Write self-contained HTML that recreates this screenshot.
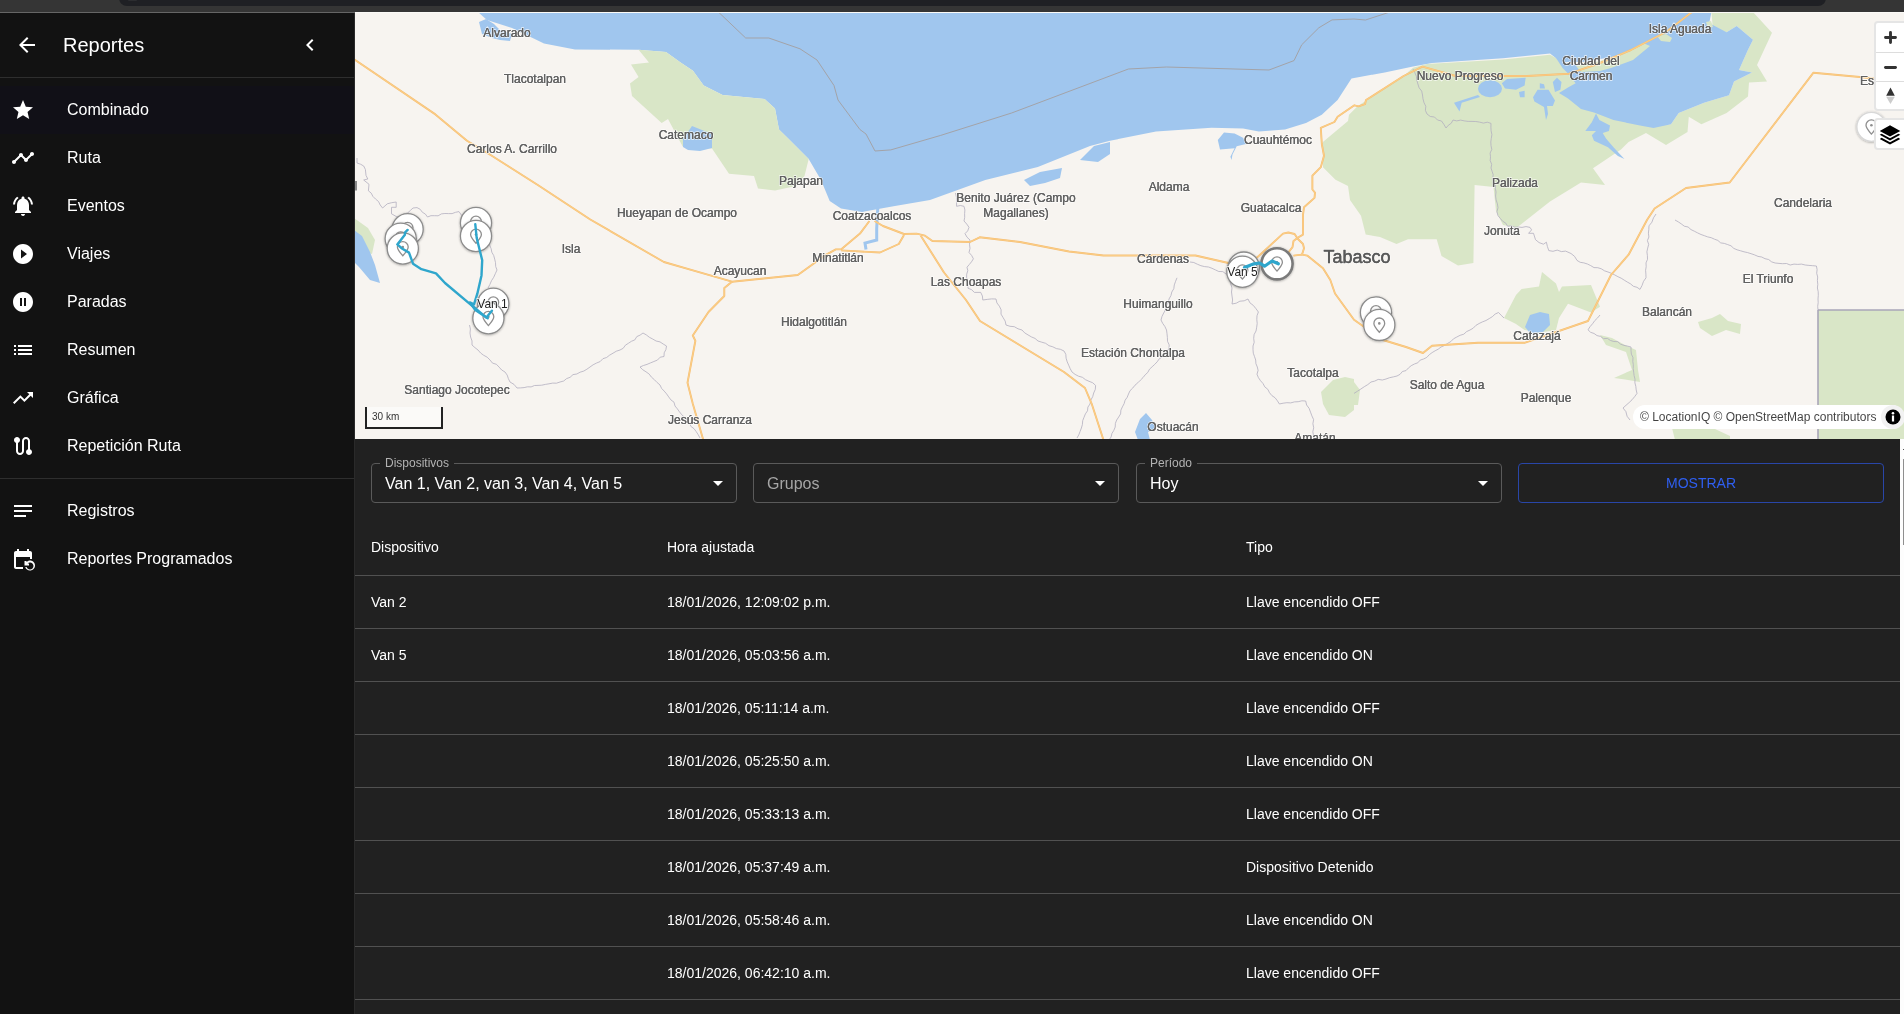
<!DOCTYPE html>
<html><head><meta charset="utf-8">
<style>
*{box-sizing:border-box;margin:0;padding:0}
html,body{width:1904px;height:1014px;overflow:hidden;background:#121212;font-family:"Liberation Sans",sans-serif;}
#top{position:absolute;left:0;top:0;width:1904px;height:12px;background:#353535}
#top .bar{position:absolute;left:119px;top:-10px;width:1707px;height:16px;background:#1f2024;border-radius:9px}
#topline{position:absolute;left:0;top:12px;width:355px;height:1px;background:#666}
#side{will-change:transform;position:absolute;left:0;top:13px;width:354px;height:1001px;background:#121212}
#sideborder{position:absolute;left:354px;top:13px;width:1px;height:1001px;background:#2a2a2a}
.hdr{position:absolute;left:0;top:0;width:354px;height:65px;border-bottom:1px solid #2e2e2e}
.hdr .t{position:absolute;left:63px;top:20px;font-size:20px;color:#fff;line-height:24px}
.item{position:absolute;left:0;width:354px;height:48px}
.item.sel{background:#111017}
.item .ic{position:absolute;left:11px;top:12px;width:24px;height:24px}
.item .lb{position:absolute;left:67px;top:12px;font-size:16px;line-height:24px;color:#fff}
.div2{position:absolute;left:0;top:465px;width:354px;height:1px;background:#2e2e2e}
#map{will-change:transform;position:absolute;left:355px;top:13px;width:1549px;height:426px;overflow:hidden;background:#f7f4f0}
#panel{will-change:transform;position:absolute;left:355px;top:439px;width:1545px;height:575px;background:#212121}
#scroll{position:absolute;left:1900px;top:439px;width:4px;height:575px;background:#fdfdfd}
.fld{position:absolute;top:24px;height:40px;width:366px;border:1px solid #5a5a5a;border-radius:4px}
.fld .lab{position:absolute;left:8px;top:-8px;padding:0 5px;background:#212121;font-size:12px;line-height:14px;color:#b3b3b3}
.fld .val{position:absolute;left:13px;top:10px;font-size:16px;line-height:19px;color:#fff}
.fld .val.ph{color:#a6a6a6}
.fld .arr{position:absolute;right:13px;top:17px;width:0;height:0;border-left:5px solid transparent;border-right:5px solid transparent;border-top:5px solid #fff}
.btn{position:absolute;top:24px;left:1163px;width:366px;height:40px;border:1px solid #2946a8;border-radius:4px;color:#2f5ff0;font-size:14px;text-align:center;line-height:38px;letter-spacing:0}
.th{position:absolute;top:80px;left:0;width:1545px;height:57px;border-bottom:1px solid #515151}
.tr{position:absolute;left:0;width:1545px;height:53px;border-bottom:1px solid #515151}
.c{position:absolute;font-size:14px;color:#fff;line-height:20px}
.th .c{top:18px;line-height:20px}
.tr .c{top:16px}
.c1{left:16px}.c2{left:312px}.c3{left:891px}
#mapsvg{position:absolute;left:0;top:0}
.lbl{font-family:"Liberation Sans",sans-serif;fill:#606060;text-anchor:middle;paint-order:stroke;stroke:rgba(255,255,255,0.8);stroke-width:1.5px}
.big{font-size:18px}
.lbl2{font-family:"Liberation Sans",sans-serif;fill:#626262;text-anchor:middle;stroke:#626262;stroke-width:0.22px}
.lbl2.big{stroke-width:0.4px;fill:#5a5a5a;stroke:#5a5a5a}
.vl{font-family:"Liberation Sans",sans-serif;font-size:12px;fill:#222;text-anchor:middle;paint-order:stroke;stroke:rgba(255,255,255,0.85);stroke-width:1.5px}
.mctl{position:absolute;background:#fff;border:2px solid rgba(0,0,0,0.1);border-radius:4px;overflow:hidden}
.mctl .mb{position:absolute;left:0;width:40px;height:29px}
.scale{position:absolute;left:10px;top:394px;width:78px;height:22px;border:2px solid #222;border-top:none;background:rgba(255,255,255,0.5)}
.scale span{position:absolute;left:5px;top:4px;font-size:10px;color:#333;line-height:12px}
.attr{position:absolute;left:1278px;top:392px;width:271px;height:24px;background:#fff;border-radius:12px;font-size:12px;line-height:24px;color:rgba(0,0,0,0.75);padding-left:7px}
.info{position:absolute;left:1526px;top:392px;width:24px;height:24px;border-radius:12px;background:#f2f2f2}
</style></head><body>
<div id="top"><div class="bar"></div></div>
<div id="topline"></div><div style="position:absolute;left:355px;top:12px;width:1549px;height:1px;background:#fbfaf7"></div><div style="position:absolute;left:128px;top:0;width:9px;height:1px;background:#2c2d30;border-radius:0 0 4px 4px"></div>
<div id="side">
  <div class="hdr">
    <svg style="position:absolute;left:15px;top:20px" width="24" height="24" viewBox="0 0 24 24"><path fill="#fff" d="M20 11H7.83l5.59-5.59L12 4l-8 8 8 8 1.41-1.41L7.83 13H20v-2z"/></svg>
    <div class="t">Reportes</div>
    <svg style="position:absolute;left:298px;top:20px" width="24" height="24" viewBox="0 0 24 24"><path fill="#fff" d="M15.41 7.41L14 6l-6 6 6 6 1.41-1.41L10.83 12z"/></svg>
  </div>
  <div class="item sel" style="top:73px"><svg class="ic" viewBox="0 0 24 24"><path fill="#fff" d="M12 17.27L18.18 21l-1.64-7.03L22 9.24l-7.19-.61L12 2 9.19 8.63 2 9.24l5.46 4.73L5.82 21z"/></svg><div class="lb">Combinado</div></div>
  <div class="item" style="top:121px"><svg class="ic" viewBox="0 0 24 24"><path fill="#fff" d="M23 8c0 1.1-.9 2-2 2-.18 0-.35-.02-.51-.07l-3.56 3.55c.05.16.07.34.07.52 0 1.1-.9 2-2 2s-2-.9-2-2c0-.18.02-.36.07-.52l-2.55-2.55c-.16.05-.34.07-.52.07s-.36-.02-.52-.07l-4.55 4.56c.05.16.07.33.07.51 0 1.1-.9 2-2 2s-2-.9-2-2 .9-2 2-2c.18 0 .35.02.51.07l4.56-4.55C8.02 9.36 8 9.18 8 9c0-1.1.9-2 2-2s2 .9 2 2c0 .18-.02.36-.07.52l2.55 2.55c.16-.05.34-.07.52-.07s.36.02.52.07l3.55-3.56C19.02 8.35 19 8.18 19 8c0-1.1.9-2 2-2s2 .9 2 2z"/></svg><div class="lb">Ruta</div></div>
  <div class="item" style="top:169px"><svg class="ic" viewBox="0 0 24 24"><path fill="#fff" d="M7.58 4.08L6.15 2.65C3.75 4.48 2.17 7.3 2.03 10.5h2c.15-2.65 1.51-4.97 3.55-6.42zm12.39 6.42h2c-.15-3.2-1.73-6.02-4.12-7.85l-1.42 1.43c2.02 1.45 3.39 3.77 3.54 6.42zM18 11c0-3.07-1.64-5.64-4.5-6.32V4c0-.83-.67-1.5-1.5-1.5s-1.5.67-1.5 1.5v.68C7.63 5.36 6 7.92 6 11v5l-2 2v1h16v-1l-2-2v-5zm-6 11c.14 0 .27-.01.4-.04.65-.14 1.18-.58 1.44-1.18.1-.24.15-.5.15-.78h-4c.01 1.1.9 2 2.01 2z"/></svg><div class="lb">Eventos</div></div>
  <div class="item" style="top:217px"><svg class="ic" viewBox="0 0 24 24"><path fill="#fff" d="M12 2C6.48 2 2 6.48 2 12s4.48 10 10 10 10-4.48 10-10S17.52 2 12 2zm-2 14.5v-9l6 4.5-6 4.5z"/></svg><div class="lb">Viajes</div></div>
  <div class="item" style="top:265px"><svg class="ic" viewBox="0 0 24 24"><path fill="#fff" d="M12 2C6.48 2 2 6.48 2 12s4.48 10 10 10 10-4.48 10-10S17.52 2 12 2zm-1 14H9V8h2v8zm4 0h-2V8h2v8z"/></svg><div class="lb">Paradas</div></div>
  <div class="item" style="top:313px"><svg class="ic" viewBox="0 0 24 24"><path fill="#fff" d="M3 13h2v-2H3v2zm0 4h2v-2H3v2zm0-8h2V7H3v2zm4 4h14v-2H7v2zm0 4h14v-2H7v2zM7 7v2h14V7H7z"/></svg><div class="lb">Resumen</div></div>
  <div class="item" style="top:361px"><svg class="ic" viewBox="0 0 24 24"><path fill="#fff" d="M16 6l2.29 2.29-4.88 4.88-4-4L2 16.59 3.41 18l6-6 4 4 6.3-6.29L22 12V6z"/></svg><div class="lb">Gráfica</div></div>
  <div class="item" style="top:409px"><svg class="ic" viewBox="0 0 24 24"><path fill="#fff" d="M19 15.18V7c0-2.21-1.79-4-4-4s-4 1.79-4 4v10c0 1.1-.9 2-2 2s-2-.9-2-2V8.82C8.16 8.4 9 7.3 9 6c0-1.66-1.34-3-3-3S3 4.34 3 6c0 1.3.84 2.4 2 2.82V17c0 2.21 1.79 4 4 4s4-1.79 4-4V7c0-1.1.9-2 2-2s2 .9 2 2v8.18c-1.16.41-2 1.51-2 2.82 0 1.66 1.34 3 3 3s3-1.34 3-3c0-1.3-.84-2.4-2-2.82z"/></svg><div class="lb">Repetición Ruta</div></div>
  <div class="div2"></div>
  <div class="item" style="top:474px"><svg class="ic" viewBox="0 0 24 24"><path fill="#fff" d="M3 18h12v-2H3v2zM3 6v2h18V6H3zm0 7h18v-2H3v2z"/></svg><div class="lb">Registros</div></div>
  <div class="item" style="top:522px"><svg class="ic" viewBox="0 0 24 24"><path fill="#fff" d="M21 12V6c0-1.1-.9-2-2-2h-1V2h-2v2H8V2H6v2H5c-1.1 0-2 .9-2 2v14c0 1.1.9 2 2 2h7v-2H5V10h14v2h2zm-5.36 8c.43 1.45 1.77 2.5 3.36 2.5 1.93 0 3.5-1.57 3.5-3.5s-1.57-3.5-3.5-3.5c-.95 0-1.82.38-2.45 1H18v2h-4.5V14h2v1.02c.89-.91 2.13-1.52 3.5-1.52 2.76 0 5 2.24 5 5s-2.24 5-5 5c-2.24 0-4.13-1.47-4.77-3.5h1.41z"/></svg><div class="lb">Reportes Programados</div></div>
</div>
<div id="sideborder"></div>
<div id="map"><svg id="mapsvg" width="1549" height="426" viewBox="355 13 1549 426"><defs><filter id="sh" x="-30%" y="-30%" width="160%" height="160%"><feDropShadow dx="0" dy="0.5" stdDeviation="0.8" flood-color="#000" flood-opacity="0.35"/></filter></defs><rect x="355" y="13" width="1549" height="426" fill="#f7f4f0"/><path fill="#a0c6ee" d="M478.0 12.0 L487.0 20.0 L512.0 28.0 L544.0 43.5 L575.0 49.4 L638.6 49.8 L666.0 52.0 L680.6 62.4 L693.0 70.8 L703.7 85.5 L722.6 95.0 L764.6 99.0 L775.0 108.6 L779.0 129.6 L787.7 138.0 L808.7 159.0 L821.0 180.0 L829.7 201.0 L841.0 208.4 L862.0 212.0 L893.5 206.3 L930.0 200.0 L985.3 180.0 L1037.8 167.0 L1090.0 146.0 L1110.0 140.7 L1156.0 131.5 L1211.5 127.8 L1243.0 128.4 L1258.8 131.5 L1285.0 129.4 L1306.0 123.0 L1321.8 114.7 L1337.6 100.0 L1351.5 78.4 L1384.7 72.5 L1413.0 66.6 L1432.0 63.0 L1503.0 58.3 L1550.0 53.6 L1561.0 62.0 L1584.0 62.0 L1622.0 54.9 L1643.4 43.5 L1666.0 34.0 L1709.0 24.0 L1711.5 12.0 Z"/><path fill="#d9e6c7" d="M638.6 49.8 L666.0 52.0 L680.6 62.4 L693.0 70.8 L703.7 85.5 L722.6 95.0 L764.6 99.0 L775.0 108.6 L779.0 129.6 L787.7 138.0 L808.7 159.0 L804.5 175.9 L796.0 186.0 L775.0 190.6 L758.0 188.5 L754.0 176.0 L729.0 173.8 L712.0 148.6 L682.7 146.5 L668.0 119.0 L661.7 123.0 L632.0 96.0 L630.0 83.4 L638.6 77.0 L631.0 64.5 L649.0 62.4 Z"/><path fill="#d9e6c7" d="M1322.9 142.0 L1348.0 121.0 L1349.0 114.7 L1357.5 106.3 L1367.0 100.0 L1403.6 76.0 L1413.0 67.8 L1427.0 64.0 L1503.0 59.5 L1550.0 54.7 L1556.0 58.0 L1566.0 70.0 L1590.0 85.0 L1586.0 106.8 L1621.0 118.6 L1650.0 125.7 L1671.0 124.2 L1678.7 112.9 L1704.0 102.8 L1729.0 95.2 L1734.0 81.4 L1752.0 72.5 L1739.0 70.0 L1748.0 49.8 L1753.0 39.7 L1736.7 25.9 L1726.6 32.2 L1712.8 28.4 L1711.5 12.0 L1753.0 12.0 L1772.0 32.8 L1757.0 65.0 L1767.0 81.4 L1749.0 82.6 L1748.0 96.5 L1726.6 112.9 L1701.4 124.2 L1688.8 116.7 L1687.5 132.0 L1666.0 145.0 L1646.0 133.0 L1628.6 142.0 L1621.0 149.4 L1593.0 168.3 L1605.0 185.0 L1581.0 182.5 L1550.0 201.5 L1517.0 227.5 L1503.0 225.0 L1496.0 211.0 L1493.5 187.0 L1474.6 185.0 L1473.4 263.0 L1458.0 265.4 L1441.5 256.0 L1436.7 239.3 L1408.0 239.3 L1396.5 244.0 L1380.0 237.0 L1365.7 234.6 L1361.0 215.7 L1350.0 200.0 L1348.0 186.0 L1335.5 179.8 L1323.0 167.2 Z"/><path fill="#d9e6c7" d="M1504.0 318.0 L1516.0 295.0 L1521.6 289.0 L1539.0 286.5 L1542.0 272.0 L1556.0 283.6 L1559.0 292.0 L1562.0 286.5 L1591.0 285.0 L1600.0 306.7 L1591.0 312.5 L1568.0 303.8 L1559.0 318.0 L1556.0 330.0 L1539.0 332.7 L1524.5 330.0 L1516.0 324.0 Z"/><path fill="#d9e6c7" d="M1698.0 322.0 L1712.0 318.0 L1720.0 314.0 L1728.0 321.0 L1741.0 324.0 L1740.0 334.0 L1726.0 330.0 L1712.0 336.0 L1700.0 328.0 Z"/><path fill="#d9e6c7" d="M1321.0 392.0 L1333.0 380.0 L1345.0 377.0 L1354.0 379.0 L1354.0 410.0 L1345.0 417.0 L1329.0 415.0 L1323.0 404.0 Z"/><path fill="#d9e6c7" d="M1600.0 335.0 L1612.0 338.0 L1625.0 345.0 L1636.0 350.0 L1638.0 370.0 L1640.0 382.0 L1628.0 380.0 L1614.0 378.0 L1632.0 370.0 L1626.0 352.0 L1606.0 345.0 Z"/><path fill="#d9e6c7" d="M1672.0 428.0 L1700.0 422.0 L1730.0 436.0 L1730.0 440.0 L1675.0 440.0 Z"/><path fill="#d9e6c7" d="M1354.0 382.0 L1360.0 390.0 L1358.0 405.0 L1354.0 405.0 Z"/><path fill="#d9e6c7" d="M1818.0 310.0 L1904.0 310.0 L1904.0 440.0 L1818.0 440.0 Z"/><path fill="#d9e6c7" d="M354.0 218.0 L368.0 228.0 L375.0 240.0 L372.0 254.0 L360.0 250.0 L354.0 240.0 Z"/><path fill="#a0c6ee" d="M1554.0 55.0 L1562.6 62.0 L1581.0 66.0 L1600.5 62.0 L1622.0 54.9 L1643.4 43.5 L1666.0 33.0 L1709.0 23.0 L1726.6 32.2 L1736.7 25.9 L1753.0 39.7 L1748.0 49.8 L1739.0 70.0 L1752.0 72.5 L1734.0 81.4 L1729.0 95.2 L1704.0 102.8 L1678.7 112.9 L1671.0 124.2 L1653.5 128.0 L1640.0 125.5 L1613.5 120.0 L1594.0 112.5 L1581.0 109.0 L1568.0 98.4 L1559.0 93.0 L1568.0 87.5 L1575.6 83.2 L1568.0 73.4 L1562.6 68.0 Z"/><path fill="#a0c6ee" d="M479.0 22.0 L486.0 19.0 L494.0 24.0 L500.0 30.0 L512.0 34.0 L510.0 41.0 L500.0 40.0 L492.0 38.0 L482.0 34.0 Z"/><path fill="#a0c6ee" d="M683.0 139.0 L692.0 126.0 L697.0 128.0 L712.0 134.0 L712.0 148.0 L700.0 151.0 L688.0 150.0 L683.0 147.0 Z"/><path fill="#a0c6ee" d="M1502.0 88.7 L1501.1 92.0 L1498.5 94.7 L1494.6 96.6 L1490.0 97.2 L1485.4 96.6 L1481.5 94.7 L1478.9 92.0 L1478.0 88.7 L1478.9 85.4 L1481.5 82.7 L1485.4 80.8 L1490.0 80.2 L1494.6 80.8 L1498.5 82.7 L1501.1 85.4 Z"/><path fill="#a0c6ee" d="M1501.8 83.2 L1507.0 78.9 L1525.7 77.8 L1524.6 85.4 L1516.0 89.7 L1505.0 88.6 Z"/><path fill="#a0c6ee" d="M1533.0 97.3 L1537.6 89.7 L1548.5 89.7 L1555.0 100.5 L1552.8 106.0 L1547.0 106.0 L1548.0 114.0 L1546.0 120.0 L1544.0 107.0 L1534.4 101.6 Z"/><path fill="#a0c6ee" d="M1552.8 82.0 L1557.0 77.8 L1561.5 82.0 L1560.4 89.7 L1555.0 91.9 Z"/><path fill="#a0c6ee" d="M1539.8 83.2 L1544.0 84.3 L1545.0 88.6 L1539.8 88.6 Z"/><path fill="#a0c6ee" d="M1519.0 92.0 L1524.6 90.8 L1524.6 97.3 L1520.0 97.3 Z"/><path fill="#a0c6ee" d="M1454.0 102.7 L1478.0 95.0 L1480.0 97.0 L1461.7 102.7 L1459.5 111.4 L1456.0 106.0 Z"/><path fill="#a0c6ee" d="M1596.0 113.6 L1599.4 120.0 L1610.0 125.5 L1609.0 131.0 L1602.7 133.0 L1606.0 138.5 L1613.5 147.2 L1624.4 159.0 L1617.9 155.9 L1608.0 147.2 L1594.0 140.7 L1591.8 135.3 L1596.0 131.0 L1585.3 131.0 L1591.8 122.2 Z"/><path fill="#a0c6ee" d="M1024.0 180.0 L1040.0 172.0 L1062.0 168.0 L1060.0 178.0 L1045.0 183.0 L1030.0 186.0 Z"/><path fill="#a0c6ee" d="M1080.0 160.0 L1094.0 146.0 L1110.0 142.0 L1110.0 154.0 L1098.0 162.0 Z"/><path fill="#a0c6ee" d="M1224.0 132.6 L1234.6 133.6 L1243.0 137.8 L1246.0 144.0 L1236.7 146.2 L1232.5 154.6 L1231.5 160.0 L1230.4 156.7 L1234.6 148.3 L1220.0 149.4 L1217.8 140.0 Z"/><path fill="#a0c6ee" d="M1525.0 327.0 L1530.0 315.0 L1540.0 312.0 L1549.0 314.0 L1550.0 325.0 L1543.0 332.0 L1530.0 333.0 Z"/><path fill="#a0c6ee" d="M354.0 230.0 L362.0 236.0 L370.0 252.0 L375.0 265.0 L380.0 283.0 L370.0 280.0 L359.0 267.0 L354.0 262.0 Z"/><path fill="#a0c6ee" d="M1135.0 432.0 L1140.0 419.0 L1146.0 413.0 L1152.0 420.0 L1156.0 428.0 L1148.0 432.0 L1150.0 440.0 L1138.0 440.0 Z"/><path fill="#d9e6c7" d="M1576.0 66.0 L1600.0 61.0 L1622.0 54.0 L1643.0 43.0 L1650.0 46.0 L1633.0 60.0 L1611.0 68.0 L1600.0 71.0 L1581.0 72.0 Z"/><path fill="#d9e6c7" d="M1657.0 36.0 L1666.0 34.0 L1672.0 38.0 L1670.0 42.0 L1661.0 41.0 Z"/><path fill="#d9e6c7" d="M1706.0 22.0 L1711.0 21.0 L1713.0 27.0 L1708.0 28.0 Z"/><path fill="none" stroke="#a0c6ee" stroke-width="3" d="M877.8 207.4 L876.7 228.4 L876.7 240.0 L865.0 243.0 L866.0 249.4"/><path fill="none" stroke="#a3a3a8" stroke-width="1.0" stroke-linejoin="round" d="M718.4 12.0 L745.7 38.0 L768.8 38.0 L800.0 48.8 L817.0 60.0 L834.0 85.5 L838.0 100.0 L860.0 129.6 L866.0 134.0 L875.0 151.0 L890.8 149.9 L940.7 135.4 L1011.6 113.0 L1128.4 69.0 L1166.5 67.0 L1269.0 70.0 L1294.0 60.6 L1301.7 44.8 L1318.8 27.8 L1332.0 19.9 L1354.0 19.0 L1365.5 20.0 L1390.0 12.0"/><path fill="none" stroke="#b3afbf" stroke-width="0.8" stroke-linejoin="round" d="M357.0 158.0 L357.0 163.0 L360.5 164.2 L363.7 166.0 L365.4 169.5 L366.0 175.4 L367.8 179.0 L363.7 180.0 L369.0 184.3 L368.4 190.8 L371.2 193.1 L372.9 196.4 L375.5 199.0 L378.5 201.5 L380.2 205.0 L382.6 208.0 L387.3 203.8 L391.7 202.7 L396.2 202.0 L396.2 207.3 L391.5 207.3 L391.5 213.8 L396.8 216.8 L400.0 216.8 L403.4 214.2 L407.6 213.0 L410.3 210.5 L413.0 208.0 L417.0 207.6 L420.2 209.3 L422.3 212.2 L425.4 214.1 L427.5 217.0 L430.9 215.7 L434.5 215.7 L438.1 215.8 L441.4 213.9 L444.9 213.5 L448.5 213.6 L452.1 213.6 L455.5 212.3 L459.0 211.6 L461.7 215.5 L464.0 219.5 L467.7 220.5 L471.5 218.9 L475.2 220.4 L479.0 219.5 L482.7 220.0 L484.3 223.4 L485.4 227.0 L486.1 230.6 L486.2 234.4 L488.4 237.7 L488.7 241.5 L489.6 245.1 L491.1 248.5 L491.8 252.2 L493.7 255.5 L494.7 259.1 L495.5 262.7 L495.7 266.5 L497.0 270.0 L495.3 273.7 L493.7 277.3 L491.5 280.7 L489.9 284.4 L488.0 288.0"/><path fill="none" stroke="#b3afbf" stroke-width="0.8" stroke-linejoin="round" d="M469.5 325.0 L470.4 329.0 L470.0 333.1 L470.6 337.0 L472.0 340.9 L472.0 345.0 L474.9 347.6 L478.0 350.0 L480.6 353.0 L483.7 355.3 L487.2 357.2 L490.0 360.0 L492.5 363.1 L496.4 364.3 L499.1 367.1 L501.7 370.0 L505.0 372.0 L507.2 375.1 L508.4 378.7 L510.0 382.0 L514.0 384.4 L517.0 388.0 L520.5 387.9 L524.1 387.6 L527.5 386.8 L531.1 386.9 L534.5 385.5 L538.0 385.4 L541.7 385.2 L545.4 384.4 L549.0 383.8 L552.7 383.1 L556.4 383.2 L560.0 382.0 L563.7 381.0 L566.6 378.6 L570.1 377.3 L573.0 374.6 L576.8 374.0 L580.1 372.2 L583.7 371.1 L586.9 369.2 L590.0 367.0 L593.1 364.8 L596.6 363.0 L600.1 361.6 L602.9 358.7 L606.6 357.5 L609.7 355.1 L613.0 353.2 L616.3 351.2 L620.0 350.0 L623.2 348.3 L625.4 345.2 L628.4 343.3 L631.4 341.3 L634.8 339.9 L636.8 336.6 L640.1 335.1 L643.0 333.0 L646.3 334.9 L649.4 337.3 L652.8 339.1 L656.1 341.0 L660.0 341.9 L663.2 344.0 L666.5 346.0 L665.9 349.6 L664.2 352.8 L664.0 356.5 L660.2 357.2 L657.4 360.1 L653.9 361.5 L650.5 362.9 L647.0 364.4 L643.4 365.5 L640.0 367.0 L642.7 369.7 L646.0 371.8 L649.2 374.1 L651.5 377.2 L654.4 379.7 L657.1 382.5 L660.0 385.0 L661.6 388.4 L664.2 391.1 L666.6 393.9 L668.7 396.9 L670.9 399.9 L674.0 402.2 L675.0 406.0 L677.4 408.9 L679.5 411.9 L681.8 414.8 L684.6 417.3 L686.8 420.2 L689.5 422.8 L690.9 426.4 L694.0 428.7 L696.2 431.6 L698.2 434.7 L700.0 438.0"/><path fill="none" stroke="#b3afbf" stroke-width="0.8" stroke-linejoin="round" d="M955.5 193.0 L956.5 197.4 L956.5 201.8 L956.6 206.3 L960.3 205.5 L964.0 206.3 L964.9 210.0 L964.6 213.7 L964.7 217.3 L964.0 221.0 L966.7 224.0 L969.0 227.3 L967.7 230.9 L965.0 233.6 L967.0 237.2 L970.0 240.0 L969.5 244.2 L970.0 248.4 L969.0 252.5 L971.6 255.4 L973.4 258.8 L971.5 261.8 L969.3 264.5 L967.0 267.2 L967.8 270.7 L966.7 274.2 L966.6 277.7 L967.7 281.2 L967.9 284.7 L968.0 288.2 L971.6 289.7 L974.4 292.4 L980.7 292.4 L982.4 296.0 L982.8 300.0 L987.2 299.4 L991.6 298.9 L996.0 299.0 L996.9 302.9 L999.4 306.2 L1001.1 309.8 L1001.0 314.1 L1003.1 317.6 L1005.2 321.1 L1006.0 325.0 L1010.0 326.3 L1014.3 326.7 L1018.0 328.8 L1022.0 330.0 L1024.7 332.9 L1028.0 334.9 L1031.4 336.9 L1035.0 338.4 L1038.0 341.0 L1041.8 342.2 L1045.6 343.3 L1049.0 345.7 L1052.8 346.8 L1056.4 348.6 L1060.4 349.3 L1064.0 351.0 L1065.8 354.3 L1066.1 358.2 L1067.2 361.8 L1068.7 365.2 L1070.2 368.7 L1072.0 372.0 L1075.1 374.4 L1078.5 376.2 L1082.4 377.3 L1085.5 379.7 L1089.0 381.3 L1092.6 382.7 L1095.6 385.4 L1095.3 389.4 L1093.7 393.0 L1092.7 396.7 L1090.8 400.2 L1090.0 404.0 L1087.9 407.1 L1087.5 410.8 L1085.4 413.9 L1084.0 417.3 L1082.7 420.7 L1082.4 424.5 L1081.4 428.0 L1080.1 431.4 L1078.8 434.8 L1077.0 438.0"/><path fill="none" stroke="#b3afbf" stroke-width="0.8" stroke-linejoin="round" d="M1190.0 262.0 L1193.8 262.5 L1197.3 264.2 L1200.9 265.7 L1204.6 266.6 L1208.5 267.0 L1212.0 268.3 L1215.4 269.9 L1218.8 271.5 L1222.8 271.6 L1225.9 273.9 L1229.5 275.0 L1229.6 279.5 L1230.7 283.8 L1232.0 288.0 L1231.5 292.0 L1232.0 296.0 L1232.6 300.0 L1232.0 304.0 L1236.2 303.2 L1239.9 301.2 L1244.2 300.8 L1248.0 299.0 L1249.9 302.8 L1253.3 305.4 L1255.9 308.6 L1258.4 312.0 L1257.0 315.7 L1256.8 319.5 L1257.2 323.4 L1256.7 327.2 L1256.0 331.0 L1254.1 334.6 L1253.7 338.4 L1254.2 342.3 L1253.0 346.0 L1253.0 349.6 L1253.3 353.2 L1254.5 356.6 L1255.7 360.0 L1255.9 363.6 L1257.3 367.0 L1258.1 370.4 L1257.0 374.2 L1258.4 377.6 L1260.5 380.7 L1263.0 383.5 L1264.8 386.9 L1267.8 389.3 L1269.5 392.7 L1271.9 395.6 L1275.1 397.8 L1277.4 400.8 L1279.4 404.0 L1283.1 403.2 L1286.9 402.7 L1290.7 402.9 L1294.4 401.9 L1298.2 401.7 L1301.9 400.8 L1305.7 401.0 L1306.6 405.0 L1309.1 408.3 L1310.5 412.1 L1311.9 415.9 L1313.6 419.6 L1312.9 423.7 L1313.7 427.8 L1312.8 431.8 L1313.6 435.9 L1313.6 440.0"/><path fill="none" stroke="#b3afbf" stroke-width="0.8" stroke-linejoin="round" d="M1177.0 277.8 L1175.6 281.3 L1174.3 284.9 L1173.8 288.7 L1171.8 292.0 L1170.9 295.7 L1169.0 299.0 L1168.5 302.8 L1165.8 305.8 L1165.6 309.7 L1163.7 313.0 L1162.0 316.4 L1161.0 320.0 L1162.7 323.4 L1164.9 326.5 L1166.5 330.0 L1167.0 333.7 L1167.4 337.5 L1167.5 341.3 L1169.2 344.9 L1169.0 348.7 L1166.6 351.3 L1164.6 354.3 L1162.2 356.9 L1159.2 358.9 L1157.2 361.8 L1154.7 364.4 L1152.1 366.8 L1149.5 369.2 L1147.8 372.4 L1145.2 374.8 L1143.0 377.6 L1140.4 380.2 L1137.8 382.8 L1135.0 385.2 L1132.7 388.1 L1130.0 390.7 L1128.5 394.0 L1127.2 397.3 L1125.1 400.2 L1124.1 403.7 L1122.4 406.9 L1120.9 410.1 L1120.6 413.9 L1118.7 417.0 L1116.7 420.0 L1115.4 423.3 L1115.2 427.1 L1113.8 430.4 L1111.9 433.5 L1111.1 437.0 L1109.0 440.0"/><path fill="none" stroke="#b3afbf" stroke-width="0.8" stroke-linejoin="round" d="M1413.0 69.0 L1414.8 72.6 L1416.4 76.2 L1416.8 80.2 L1417.9 84.0 L1419.1 87.8 L1421.7 91.1 L1422.5 95.0 L1423.0 98.9 L1424.0 102.7 L1425.8 106.3 L1425.4 110.4 L1427.0 114.0 L1430.3 116.5 L1434.5 117.0 L1437.5 120.0 L1441.5 121.0 L1443.9 124.4 L1446.0 128.0 L1448.3 125.3 L1451.3 123.2 L1453.0 120.0 L1456.7 120.9 L1460.7 120.1 L1464.4 120.9 L1468.2 121.4 L1472.0 121.4 L1475.8 121.5 L1479.6 122.1 L1483.4 123.1 L1487.3 122.2 L1491.0 123.4 L1490.9 127.1 L1491.1 130.8 L1491.9 134.6 L1491.3 138.3 L1490.8 142.0 L1491.0 145.7 L1491.8 149.4 L1490.1 153.1 L1490.5 156.8 L1490.2 160.6 L1491.7 164.3 L1491.0 168.0 L1492.1 171.3 L1493.2 174.7 L1492.7 178.4 L1494.3 181.6 L1495.2 185.0 L1495.4 188.5 L1496.0 192.0 L1495.6 196.0 L1496.1 199.9 L1497.4 203.8 L1498.0 207.7 L1496.9 211.8 L1498.0 215.7 L1500.3 218.4 L1502.6 221.2 L1505.8 223.2 L1507.7 226.3 L1511.3 225.8 L1514.8 227.2 L1518.4 227.0 L1522.0 227.4 L1526.0 226.6 L1530.0 227.4 L1531.6 229.9 L1528.6 233.3 L1533.5 233.3 L1535.5 239.7 L1539.1 242.6 L1543.4 244.2 L1546.4 242.2 L1547.4 246.5 L1548.8 250.6 L1553.0 251.3 L1557.2 250.1 L1561.4 251.6 L1565.6 251.1 L1571.0 253.5 L1574.6 256.4 L1577.0 260.4 L1580.2 262.3 L1583.9 262.9 L1587.4 264.0 L1590.7 265.6 L1594.0 267.6 L1597.8 267.7 L1601.3 268.8 L1604.5 270.8 L1608.0 272.0 L1611.4 273.3 L1614.7 274.9 L1617.9 276.7 L1621.2 278.2 L1624.3 280.2 L1627.4 282.1 L1630.6 283.9 L1633.4 286.3 L1637.0 287.3 L1640.0 289.4 L1642.0 285.5 L1643.5 281.4 L1646.0 277.8 L1645.9 274.1 L1645.6 270.3 L1646.2 266.6 L1646.0 262.9 L1647.5 259.3 L1647.4 255.5 L1646.9 251.8 L1647.7 248.1 L1648.7 244.4 L1647.4 240.6 L1648.9 237.0 L1648.4 233.2 L1648.8 229.5 L1649.0 225.8 L1651.9 222.2 L1653.5 217.8 L1656.0 214.0"/><path fill="none" stroke="#b3afbf" stroke-width="0.8" stroke-linejoin="round" d="M1675.0 220.0 L1678.2 221.8 L1681.3 223.9 L1684.3 226.2 L1688.1 227.0 L1691.0 229.6 L1694.3 231.2 L1697.6 232.9 L1701.0 234.5 L1704.4 235.7 L1707.7 236.9 L1711.2 237.7 L1714.5 239.2 L1717.8 240.4 L1720.7 242.9 L1724.3 243.4 L1727.7 244.6 L1731.0 245.8 L1733.8 248.4 L1737.1 249.8 L1740.6 250.8 L1744.0 251.8 L1747.6 252.6 L1751.1 253.7 L1754.6 254.9 L1758.0 256.4 L1761.7 257.0 L1765.0 258.7 L1768.6 259.5 L1771.7 261.9 L1775.2 263.0 L1779.0 263.4 L1782.7 263.7 L1786.5 263.5 L1790.2 265.0 L1794.0 264.1 L1797.7 264.4 L1801.5 264.1 L1805.2 265.0 L1808.9 265.4 L1812.7 265.7 L1816.4 266.0 L1817.1 269.6 L1816.7 273.3 L1817.7 277.0 L1817.4 280.7 L1817.8 284.3 L1817.4 288.0 L1818.2 291.6 L1818.3 295.3 L1818.0 299.0 L1818.2 302.6 L1817.7 306.3 L1818.0 310.0"/><path fill="none" stroke="#a9a6b8" stroke-width="1.6" stroke-linejoin="round" d="M1818.0 310.0 L1818.0 440.0"/><path fill="none" stroke="#a9a6b8" stroke-width="1.6" stroke-linejoin="round" d="M1818.0 310.0 L1904.0 310.0"/><path fill="none" stroke="#b3afbf" stroke-width="0.8" stroke-linejoin="round" d="M1600.0 315.0 L1597.6 317.9 L1594.8 320.6 L1592.6 323.7 L1590.1 326.6 L1588.0 329.8 L1590.6 332.3 L1594.1 333.5 L1597.0 335.6 L1600.5 336.4 L1603.5 338.7 L1607.4 338.4 L1610.5 340.5 L1613.9 341.5 L1617.7 341.7 L1620.6 344.2 L1624.0 345.4 L1627.5 346.1 L1631.0 347.0 L1631.0 350.6 L1631.4 354.2 L1633.0 357.6 L1632.8 361.3 L1633.3 364.8 L1633.2 368.5 L1633.7 372.1 L1634.1 375.6 L1635.0 379.1 L1634.9 382.8 L1635.8 386.3 L1636.2 389.9 L1637.0 393.4 L1634.6 396.7 L1632.0 399.8 L1629.1 402.6 L1626.0 405.3 L1623.0 408.0 L1625.9 411.6 L1627.1 416.3 L1630.0 420.0"/><path fill="none" stroke="#b3afbf" stroke-width="0.8" stroke-linejoin="round" d="M1354.0 393.4 L1357.5 391.2 L1360.9 389.0 L1364.3 386.7 L1367.8 384.6 L1371.0 382.0 L1374.7 381.1 L1378.2 379.4 L1382.3 380.0 L1386.0 379.0 L1389.6 377.7 L1393.3 376.9 L1397.0 376.0 L1400.1 374.3 L1402.4 371.5 L1406.0 370.6 L1408.5 367.9 L1411.2 365.7 L1414.4 364.0 L1417.8 362.8 L1420.2 360.1 L1423.6 359.0 L1426.8 357.4 L1429.3 354.7 L1432.1 352.6 L1435.1 350.8 L1438.2 349.2 L1441.0 347.0 L1444.5 345.5 L1447.6 343.4 L1450.8 341.6 L1453.5 338.8 L1456.8 337.0 L1460.1 335.3 L1463.8 334.2 L1466.6 331.6 L1470.0 330.0 L1473.2 328.2 L1475.9 325.4 L1479.1 323.5 L1482.4 321.9 L1486.0 320.5 L1489.2 318.6 L1492.3 316.7 L1495.1 314.1 L1498.5 312.5 L1501.2 315.3 L1504.0 318.0"/><path fill="none" stroke="#f5bd72" stroke-width="1.9" stroke-linejoin="round" d="M354.0 59.3 L435.4 114.4 L467.0 140.7 L490.6 155.0 L537.8 185.0 L590.3 219.5 L663.9 262.0 L732.0 281.7 L797.8 275.0 L826.3 254.6 L835.8 249.4 L841.0 249.4 L860.0 233.6 L869.4 221.0"/><path fill="none" stroke="#fbcd86" stroke-width="1.1" stroke-linejoin="round" d="M354.0 59.3 L435.4 114.4 L467.0 140.7 L490.6 155.0 L537.8 185.0 L590.3 219.5 L663.9 262.0 L732.0 281.7 L797.8 275.0 L826.3 254.6 L835.8 249.4 L841.0 249.4 L860.0 233.6 L869.4 221.0"/><path fill="none" stroke="#f5bd72" stroke-width="1.9" stroke-linejoin="round" d="M874.6 221.0 L883.0 226.0 L904.0 234.0 L916.6 233.6 L925.0 235.7 L932.4 241.0 L970.0 242.0 L979.7 237.3 L1020.0 242.0 L1069.0 251.5 L1103.5 255.5 L1195.4 255.5 L1229.5 263.3"/><path fill="none" stroke="#fbcd86" stroke-width="1.1" stroke-linejoin="round" d="M874.6 221.0 L883.0 226.0 L904.0 234.0 L916.6 233.6 L925.0 235.7 L932.4 241.0 L970.0 242.0 L979.7 237.3 L1020.0 242.0 L1069.0 251.5 L1103.5 255.5 L1195.4 255.5 L1229.5 263.3"/><path fill="none" stroke="#f5bd72" stroke-width="1.9" stroke-linejoin="round" d="M732.0 281.7 L724.3 288.0 L724.3 296.0 L708.5 312.0 L692.8 335.5 L695.4 340.8 L687.5 382.8 L692.8 403.8 L703.3 440.0"/><path fill="none" stroke="#fbcd86" stroke-width="1.1" stroke-linejoin="round" d="M732.0 281.7 L724.3 288.0 L724.3 296.0 L708.5 312.0 L692.8 335.5 L695.4 340.8 L687.5 382.8 L692.8 403.8 L703.3 440.0"/><path fill="none" stroke="#f5bd72" stroke-width="1.9" stroke-linejoin="round" d="M920.8 235.7 L944.0 272.5 L966.0 300.0 L980.0 321.0 L1064.0 372.0 L1085.0 388.0 L1091.7 403.8 L1103.5 440.0"/><path fill="none" stroke="#fbcd86" stroke-width="1.1" stroke-linejoin="round" d="M920.8 235.7 L944.0 272.5 L966.0 300.0 L980.0 321.0 L1064.0 372.0 L1085.0 388.0 L1091.7 403.8 L1103.5 440.0"/><path fill="none" stroke="#f5bd72" stroke-width="1.9" stroke-linejoin="round" d="M841.0 250.4 L880.0 252.5 L898.8 244.0 L904.0 235.0"/><path fill="none" stroke="#fbcd86" stroke-width="1.1" stroke-linejoin="round" d="M841.0 250.4 L880.0 252.5 L898.8 244.0 L904.0 235.0"/><path fill="none" stroke="#f5bd72" stroke-width="1.9" stroke-linejoin="round" d="M1256.8 257.7 L1283.0 233.6 L1288.3 232.5 L1294.6 234.0 L1297.7 238.8 L1303.0 244.0 L1304.0 248.3 L1302.0 254.6 L1307.2 255.6 L1323.0 268.2 L1330.3 280.0 L1335.0 293.5 L1354.0 319.8 L1383.0 340.0 L1406.0 347.0 L1423.0 353.0 L1432.0 345.7 L1478.0 342.8 L1524.5 342.8 L1588.0 321.0 L1611.0 275.0 L1628.6 254.7 L1647.0 220.0 L1654.6 208.5 L1686.0 188.0 L1729.7 182.5 L1813.5 72.7 L1859.8 77.0 L1904.0 82.0"/><path fill="none" stroke="#fbcd86" stroke-width="1.1" stroke-linejoin="round" d="M1256.8 257.7 L1283.0 233.6 L1288.3 232.5 L1294.6 234.0 L1297.7 238.8 L1303.0 244.0 L1304.0 248.3 L1302.0 254.6 L1307.2 255.6 L1323.0 268.2 L1330.3 280.0 L1335.0 293.5 L1354.0 319.8 L1383.0 340.0 L1406.0 347.0 L1423.0 353.0 L1432.0 345.7 L1478.0 342.8 L1524.5 342.8 L1588.0 321.0 L1611.0 275.0 L1628.6 254.7 L1647.0 220.0 L1654.6 208.5 L1686.0 188.0 L1729.7 182.5 L1813.5 72.7 L1859.8 77.0 L1904.0 82.0"/><path fill="none" stroke="#f5bd72" stroke-width="1.9" stroke-linejoin="round" d="M1229.5 263.3 L1256.8 257.7"/><path fill="none" stroke="#fbcd86" stroke-width="1.1" stroke-linejoin="round" d="M1229.5 263.3 L1256.8 257.7"/><path fill="none" stroke="#f5bd72" stroke-width="1.9" stroke-linejoin="round" d="M1293.5 255.6 L1302.0 254.6"/><path fill="none" stroke="#fbcd86" stroke-width="1.1" stroke-linejoin="round" d="M1293.5 255.6 L1302.0 254.6"/><path fill="none" stroke="#f5bd72" stroke-width="1.9" stroke-linejoin="round" d="M1288.3 252.5 L1292.5 247.2 L1293.5 241.0 L1297.7 237.8 L1303.0 234.6 L1303.0 214.7 L1304.0 207.3 L1314.5 197.9 L1315.0 192.6 L1312.4 189.5 L1312.4 175.6 L1320.8 167.2 L1324.0 155.7 L1321.8 144.0 L1320.8 127.8 L1334.4 122.0 L1337.6 116.8 L1354.4 105.3 L1358.6 106.3 L1365.0 104.2 L1366.0 100.0 L1403.6 76.0 L1422.5 66.6 L1455.7 76.0 L1527.0 76.0 L1569.0 73.7 L1597.7 64.0 L1631.0 50.0 L1666.0 32.0 L1692.0 12.0"/><path fill="none" stroke="#fbcd86" stroke-width="1.1" stroke-linejoin="round" d="M1288.3 252.5 L1292.5 247.2 L1293.5 241.0 L1297.7 237.8 L1303.0 234.6 L1303.0 214.7 L1304.0 207.3 L1314.5 197.9 L1315.0 192.6 L1312.4 189.5 L1312.4 175.6 L1320.8 167.2 L1324.0 155.7 L1321.8 144.0 L1320.8 127.8 L1334.4 122.0 L1337.6 116.8 L1354.4 105.3 L1358.6 106.3 L1365.0 104.2 L1366.0 100.0 L1403.6 76.0 L1422.5 66.6 L1455.7 76.0 L1527.0 76.0 L1569.0 73.7 L1597.7 64.0 L1631.0 50.0 L1666.0 32.0 L1692.0 12.0"/><text x="507" y="37.0" class="lbl" font-size="12">Alvarado</text><text x="507" y="37.0" class="lbl2" font-size="12">Alvarado</text><text x="535" y="83.0" class="lbl" font-size="12">Tlacotalpan</text><text x="535" y="83.0" class="lbl2" font-size="12">Tlacotalpan</text><text x="686" y="139.0" class="lbl" font-size="12">Catemaco</text><text x="686" y="139.0" class="lbl2" font-size="12">Catemaco</text><text x="512" y="153.0" class="lbl" font-size="12">Carlos A. Carrillo</text><text x="512" y="153.0" class="lbl2" font-size="12">Carlos A. Carrillo</text><text x="801" y="185.0" class="lbl" font-size="12">Pajapan</text><text x="801" y="185.0" class="lbl2" font-size="12">Pajapan</text><text x="677" y="217.0" class="lbl" font-size="12">Hueyapan de Ocampo</text><text x="677" y="217.0" class="lbl2" font-size="12">Hueyapan de Ocampo</text><text x="872" y="220.0" class="lbl" font-size="12">Coatzacoalcos</text><text x="872" y="220.0" class="lbl2" font-size="12">Coatzacoalcos</text><text x="571" y="253.0" class="lbl" font-size="12">Isla</text><text x="571" y="253.0" class="lbl2" font-size="12">Isla</text><text x="740" y="275.0" class="lbl" font-size="12">Acayucan</text><text x="740" y="275.0" class="lbl2" font-size="12">Acayucan</text><text x="838" y="262.0" class="lbl" font-size="12">Minatitlán</text><text x="838" y="262.0" class="lbl2" font-size="12">Minatitlán</text><text x="966" y="286.0" class="lbl" font-size="12">Las Choapas</text><text x="966" y="286.0" class="lbl2" font-size="12">Las Choapas</text><text x="814" y="326.0" class="lbl" font-size="12">Hidalgotitlán</text><text x="814" y="326.0" class="lbl2" font-size="12">Hidalgotitlán</text><text x="457" y="394.0" class="lbl" font-size="12">Santiago Jocotepec</text><text x="457" y="394.0" class="lbl2" font-size="12">Santiago Jocotepec</text><text x="710" y="424.0" class="lbl" font-size="12">Jesús Carranza</text><text x="710" y="424.0" class="lbl2" font-size="12">Jesús Carranza</text><text x="1016" y="202.0" class="lbl" font-size="12">Benito Juárez (Campo</text><text x="1016" y="202.0" class="lbl2" font-size="12">Benito Juárez (Campo</text><text x="1016" y="217.0" class="lbl" font-size="12">Magallanes)</text><text x="1016" y="217.0" class="lbl2" font-size="12">Magallanes)</text><text x="1169" y="191.0" class="lbl" font-size="12">Aldama</text><text x="1169" y="191.0" class="lbl2" font-size="12">Aldama</text><text x="1278" y="144.0" class="lbl" font-size="12">Cuauhtémoc</text><text x="1278" y="144.0" class="lbl2" font-size="12">Cuauhtémoc</text><text x="1271" y="212.0" class="lbl" font-size="12">Guatacalca</text><text x="1271" y="212.0" class="lbl2" font-size="12">Guatacalca</text><text x="1163" y="263.0" class="lbl" font-size="12">Cárdenas</text><text x="1163" y="263.0" class="lbl2" font-size="12">Cárdenas</text><text x="1158" y="308.0" class="lbl" font-size="12">Huimanguillo</text><text x="1158" y="308.0" class="lbl2" font-size="12">Huimanguillo</text><text x="1133" y="357.0" class="lbl" font-size="12">Estación Chontalpa</text><text x="1133" y="357.0" class="lbl2" font-size="12">Estación Chontalpa</text><text x="1173" y="431.0" class="lbl" font-size="12">Ostuacán</text><text x="1173" y="431.0" class="lbl2" font-size="12">Ostuacán</text><text x="1315" y="442.0" class="lbl" font-size="12">Amatán</text><text x="1315" y="442.0" class="lbl2" font-size="12">Amatán</text><text x="1313" y="377.0" class="lbl" font-size="12">Tacotalpa</text><text x="1313" y="377.0" class="lbl2" font-size="12">Tacotalpa</text><text x="1460" y="80.0" class="lbl" font-size="12">Nuevo Progreso</text><text x="1460" y="80.0" class="lbl2" font-size="12">Nuevo Progreso</text><text x="1591" y="65.0" class="lbl" font-size="12">Ciudad del</text><text x="1591" y="65.0" class="lbl2" font-size="12">Ciudad del</text><text x="1591" y="80.0" class="lbl" font-size="12">Carmen</text><text x="1591" y="80.0" class="lbl2" font-size="12">Carmen</text><text x="1680" y="33.0" class="lbl" font-size="12">Isla Aguada</text><text x="1680" y="33.0" class="lbl2" font-size="12">Isla Aguada</text><text x="1870" y="85.0" class="lbl" font-size="12">Esc</text><text x="1870" y="85.0" class="lbl2" font-size="12">Esc</text><text x="1515" y="187.0" class="lbl" font-size="12">Palizada</text><text x="1515" y="187.0" class="lbl2" font-size="12">Palizada</text><text x="1803" y="207.0" class="lbl" font-size="12">Candelaria</text><text x="1803" y="207.0" class="lbl2" font-size="12">Candelaria</text><text x="1502" y="235.0" class="lbl" font-size="12">Jonuta</text><text x="1502" y="235.0" class="lbl2" font-size="12">Jonuta</text><text x="1768" y="283.0" class="lbl" font-size="12">El Triunfo</text><text x="1768" y="283.0" class="lbl2" font-size="12">El Triunfo</text><text x="1667" y="316.0" class="lbl" font-size="12">Balancán</text><text x="1667" y="316.0" class="lbl2" font-size="12">Balancán</text><text x="1537" y="340.0" class="lbl" font-size="12">Catazajá</text><text x="1537" y="340.0" class="lbl2" font-size="12">Catazajá</text><text x="1447" y="389.0" class="lbl" font-size="12">Salto de Agua</text><text x="1447" y="389.0" class="lbl2" font-size="12">Salto de Agua</text><text x="1546" y="402.0" class="lbl" font-size="12">Palenque</text><text x="1546" y="402.0" class="lbl2" font-size="12">Palenque</text><text x="1357" y="262.8" class="lbl big">Tabasco</text><text x="1357" y="262.8" class="lbl2 big">Tabasco</text><g><circle cx="407.6" cy="229.2" r="15.6" fill="#fff" stroke="#8c8c8c" stroke-width="1.3" filter="url(#sh)"/><path fill="none" stroke="#8f8f8f" stroke-width="1.3" d="M407.6 236.5 c-3.4 -3.8 -5.4 -6.4 -5.4 -8.8 a5.4 5.4 0 0 1 10.8 0 c0 2.4 -2 5 -5.4 8.8z"/><circle cx="407.6" cy="227.7" r="1.3" fill="#8f8f8f"/></g><g><circle cx="400.7" cy="238.8" r="15.6" fill="#fff" stroke="#8c8c8c" stroke-width="1.3" filter="url(#sh)"/><path fill="none" stroke="#8f8f8f" stroke-width="1.3" d="M400.7 246.10000000000002 c-3.4 -3.8 -5.4 -6.4 -5.4 -8.8 a5.4 5.4 0 0 1 10.8 0 c0 2.4 -2 5 -5.4 8.8z"/><circle cx="400.7" cy="237.3" r="1.3" fill="#8f8f8f"/></g><g><circle cx="402.8" cy="248.5" r="15.6" fill="#fff" stroke="#8c8c8c" stroke-width="1.3" filter="url(#sh)"/><path fill="none" stroke="#8f8f8f" stroke-width="1.3" d="M402.8 255.8 c-3.4 -3.8 -5.4 -6.4 -5.4 -8.8 a5.4 5.4 0 0 1 10.8 0 c0 2.4 -2 5 -5.4 8.8z"/><circle cx="402.8" cy="247.0" r="1.3" fill="#8f8f8f"/></g><g><circle cx="476" cy="223" r="15.6" fill="#fff" stroke="#8c8c8c" stroke-width="1.3" filter="url(#sh)"/><path fill="none" stroke="#8f8f8f" stroke-width="1.3" d="M476 230.3 c-3.4 -3.8 -5.4 -6.4 -5.4 -8.8 a5.4 5.4 0 0 1 10.8 0 c0 2.4 -2 5 -5.4 8.8z"/><circle cx="476" cy="221.5" r="1.3" fill="#8f8f8f"/></g><g><circle cx="476" cy="236" r="15.6" fill="#fff" stroke="#8c8c8c" stroke-width="1.3" filter="url(#sh)"/><path fill="none" stroke="#8f8f8f" stroke-width="1.3" d="M476 243.3 c-3.4 -3.8 -5.4 -6.4 -5.4 -8.8 a5.4 5.4 0 0 1 10.8 0 c0 2.4 -2 5 -5.4 8.8z"/><circle cx="476" cy="234.5" r="1.3" fill="#8f8f8f"/></g><g><circle cx="493.3" cy="303.8" r="15.6" fill="#fff" stroke="#8c8c8c" stroke-width="1.3" filter="url(#sh)"/><path fill="none" stroke="#8f8f8f" stroke-width="1.3" d="M493.3 311.1 c-3.4 -3.8 -5.4 -6.4 -5.4 -8.8 a5.4 5.4 0 0 1 10.8 0 c0 2.4 -2 5 -5.4 8.8z"/><circle cx="493.3" cy="302.3" r="1.3" fill="#8f8f8f"/></g><g><circle cx="488.4" cy="318.3" r="15.6" fill="#fff" stroke="#8c8c8c" stroke-width="1.3" filter="url(#sh)"/><path fill="none" stroke="#8f8f8f" stroke-width="1.3" d="M488.4 325.6 c-3.4 -3.8 -5.4 -6.4 -5.4 -8.8 a5.4 5.4 0 0 1 10.8 0 c0 2.4 -2 5 -5.4 8.8z"/><circle cx="488.4" cy="316.8" r="1.3" fill="#8f8f8f"/></g><g><circle cx="1243.8" cy="267.6" r="15.6" fill="#fff" stroke="#8c8c8c" stroke-width="1.3" filter="url(#sh)"/><path fill="none" stroke="#8f8f8f" stroke-width="1.3" d="M1243.8 274.90000000000003 c-3.4 -3.8 -5.4 -6.4 -5.4 -8.8 a5.4 5.4 0 0 1 10.8 0 c0 2.4 -2 5 -5.4 8.8z"/><circle cx="1243.8" cy="266.1" r="1.3" fill="#8f8f8f"/></g><g><circle cx="1242.4" cy="271.8" r="15.6" fill="#fff" stroke="#8c8c8c" stroke-width="1.3" filter="url(#sh)"/><path fill="none" stroke="#8f8f8f" stroke-width="1.3" d="M1242.4 279.1 c-3.4 -3.8 -5.4 -6.4 -5.4 -8.8 a5.4 5.4 0 0 1 10.8 0 c0 2.4 -2 5 -5.4 8.8z"/><circle cx="1242.4" cy="270.3" r="1.3" fill="#8f8f8f"/></g><g><circle cx="1376" cy="312.5" r="15.6" fill="#fff" stroke="#8c8c8c" stroke-width="1.3" filter="url(#sh)"/><path fill="none" stroke="#8f8f8f" stroke-width="1.3" d="M1376 319.8 c-3.4 -3.8 -5.4 -6.4 -5.4 -8.8 a5.4 5.4 0 0 1 10.8 0 c0 2.4 -2 5 -5.4 8.8z"/><circle cx="1376" cy="311.0" r="1.3" fill="#8f8f8f"/></g><g><circle cx="1379.3" cy="324.9" r="15.6" fill="#fff" stroke="#8c8c8c" stroke-width="1.3" filter="url(#sh)"/><path fill="none" stroke="#8f8f8f" stroke-width="1.3" d="M1379.3 332.2 c-3.4 -3.8 -5.4 -6.4 -5.4 -8.8 a5.4 5.4 0 0 1 10.8 0 c0 2.4 -2 5 -5.4 8.8z"/><circle cx="1379.3" cy="323.4" r="1.3" fill="#8f8f8f"/></g><g><circle cx="1277" cy="263.8" r="15.6" fill="#fff" stroke="#7a7a7a" stroke-width="2.6" filter="url(#sh)"/><path fill="none" stroke="#8f8f8f" stroke-width="1.3" d="M1277 271.1 c-3.4 -3.8 -5.4 -6.4 -5.4 -8.8 a5.4 5.4 0 0 1 10.8 0 c0 2.4 -2 5 -5.4 8.8z"/><circle cx="1277" cy="262.3" r="1.3" fill="#8f8f8f"/></g><g><circle cx="1871.4" cy="126.8" r="14.5" fill="#fff" stroke="#d8d8d8" stroke-width="1.3" filter="url(#sh)"/><path fill="none" stroke="#8f8f8f" stroke-width="1.3" d="M1871.4 134.1 c-3.4 -3.8 -5.4 -6.4 -5.4 -8.8 a5.4 5.4 0 0 1 10.8 0 c0 2.4 -2 5 -5.4 8.8z"/><circle cx="1871.4" cy="125.3" r="1.3" fill="#8f8f8f"/></g><path fill="none" stroke="#2fa6cc" stroke-width="2.4" stroke-linejoin="round" stroke-linecap="round" d="M407.6 229.9 L404.9 232.6 L404.9 234.7 L397.3 244.4 L402.0 248.5 L409.0 252.6 L413.0 263.7 L421.4 269.2 L436.0 273.4 L445.0 283.0 L469.8 303.8 L474.0 307.2 L486.4 317.6 L491.9 310.7"/><path fill="none" stroke="#2fa6cc" stroke-width="2.4" stroke-linejoin="round" stroke-linecap="round" d="M475.3 224.3 L476.7 238.0 L482.2 260.2 L481.5 275.4 L477.4 293.4 L474.0 304.4 L469.8 302.4 L475.3 310.0 L487.7 318.3"/><path fill="none" stroke="#2fa6cc" stroke-width="3.2" stroke-linejoin="round" stroke-linecap="round" d="M1244.5 267.6 L1254.0 263.8 L1259.7 263.0 L1264.5 266.2 L1272.0 261.0 L1278.3 263.8"/><text x="492.5" y="308.3" class="vl">Van 1</text><rect x="355" y="181" width="2" height="9.5" fill="#8a8a8a"/><text x="1242.5" y="276.3" class="vl">Van 5</text></svg>
<div class="mctl" style="left:1519px;top:8px;width:40px;height:90px">
 <div class="mb" style="top:0"><svg width="29" height="29" viewBox="0 0 29 29"><path d="M14.5 9.5v10M9.5 14.5h10" stroke="#333" stroke-width="2.9" stroke-linecap="round"/></svg></div>
 <div class="mb" style="top:29px;border-top:1px solid #ddd"><svg width="29" height="29" viewBox="0 0 29 29"><path d="M9.5 14.5h10" stroke="#333" stroke-width="2.9" stroke-linecap="round"/></svg></div>
 <div class="mb" style="top:58px;border-top:1px solid #ddd"><svg width="29" height="29" viewBox="0 0 29 29"><path d="M14.5 5.5l-4.3 8.2h8.6z" fill="#333"/><path d="M14.5 22l-4.3 -7.2h8.6z" fill="#ccc"/></svg></div>
</div>
<div class="mctl" style="left:1519px;top:105px;width:40px;height:32px">
 <svg style="position:absolute;left:1px;top:2px" width="26" height="26" viewBox="0 0 24 24"><path fill="#000" d="M12 3l9.5 5.2-9.5 5.2-9.5-5.2z"/><path fill="#000" d="M4.3 10.8l7.7 4.2 7.7-4.2 1.8 1-9.5 5.2-9.5-5.2z"/><path fill="#000" d="M4.3 14.6l7.7 4.2 7.7-4.2 1.8 1-9.5 5.2-9.5-5.2z"/></svg>
</div>
<div class="scale"><span>30 km</span></div>
<div class="attr">© LocationIQ © OpenStreetMap contributors</div>
<div class="info"><svg width="24" height="24" viewBox="0 0 24 24"><circle cx="12" cy="12" r="7.5" fill="#000"/><circle cx="12" cy="8.3" r="1.3" fill="#fff"/><rect x="10.9" y="10.5" width="2.2" height="6" fill="#fff"/></svg></div>
</div>
<div id="panel">
  <div class="fld" style="left:16px"><div class="lab">Dispositivos</div><div class="val">Van 1, Van 2, van 3, Van 4, Van 5</div><div class="arr"></div></div>
  <div class="fld" style="left:398px"><div class="val ph">Grupos</div><div class="arr"></div></div>
  <div class="fld" style="left:781px"><div class="lab">Período</div><div class="val">Hoy</div><div class="arr"></div></div>
  <div class="btn">MOSTRAR</div>
  <div class="th"><div class="c c1">Dispositivo</div><div class="c c2">Hora ajustada</div><div class="c c3">Tipo</div></div>
  <div class="tr" style="top:137px"><div class="c c1">Van 2</div><div class="c c2">18/01/2026, 12:09:02 p.m.</div><div class="c c3">Llave encendido OFF</div></div>
  <div class="tr" style="top:190px"><div class="c c1">Van 5</div><div class="c c2">18/01/2026, 05:03:56 a.m.</div><div class="c c3">Llave encendido ON</div></div>
  <div class="tr" style="top:243px"><div class="c c2">18/01/2026, 05:11:14 a.m.</div><div class="c c3">Llave encendido OFF</div></div>
  <div class="tr" style="top:296px"><div class="c c2">18/01/2026, 05:25:50 a.m.</div><div class="c c3">Llave encendido ON</div></div>
  <div class="tr" style="top:349px"><div class="c c2">18/01/2026, 05:33:13 a.m.</div><div class="c c3">Llave encendido OFF</div></div>
  <div class="tr" style="top:402px"><div class="c c2">18/01/2026, 05:37:49 a.m.</div><div class="c c3">Dispositivo Detenido</div></div>
  <div class="tr" style="top:455px"><div class="c c2">18/01/2026, 05:58:46 a.m.</div><div class="c c3">Llave encendido ON</div></div>
  <div class="tr" style="top:508px"><div class="c c2">18/01/2026, 06:42:10 a.m.</div><div class="c c3">Llave encendido OFF</div></div>
</div>
<div id="scroll"><div style="position:absolute;left:3px;top:20px;width:1px;height:86px;background:#8f8f8f"></div><div style="position:absolute;left:3px;top:10px;width:1px;height:1px;background:#555"></div></div>
</body></html>
